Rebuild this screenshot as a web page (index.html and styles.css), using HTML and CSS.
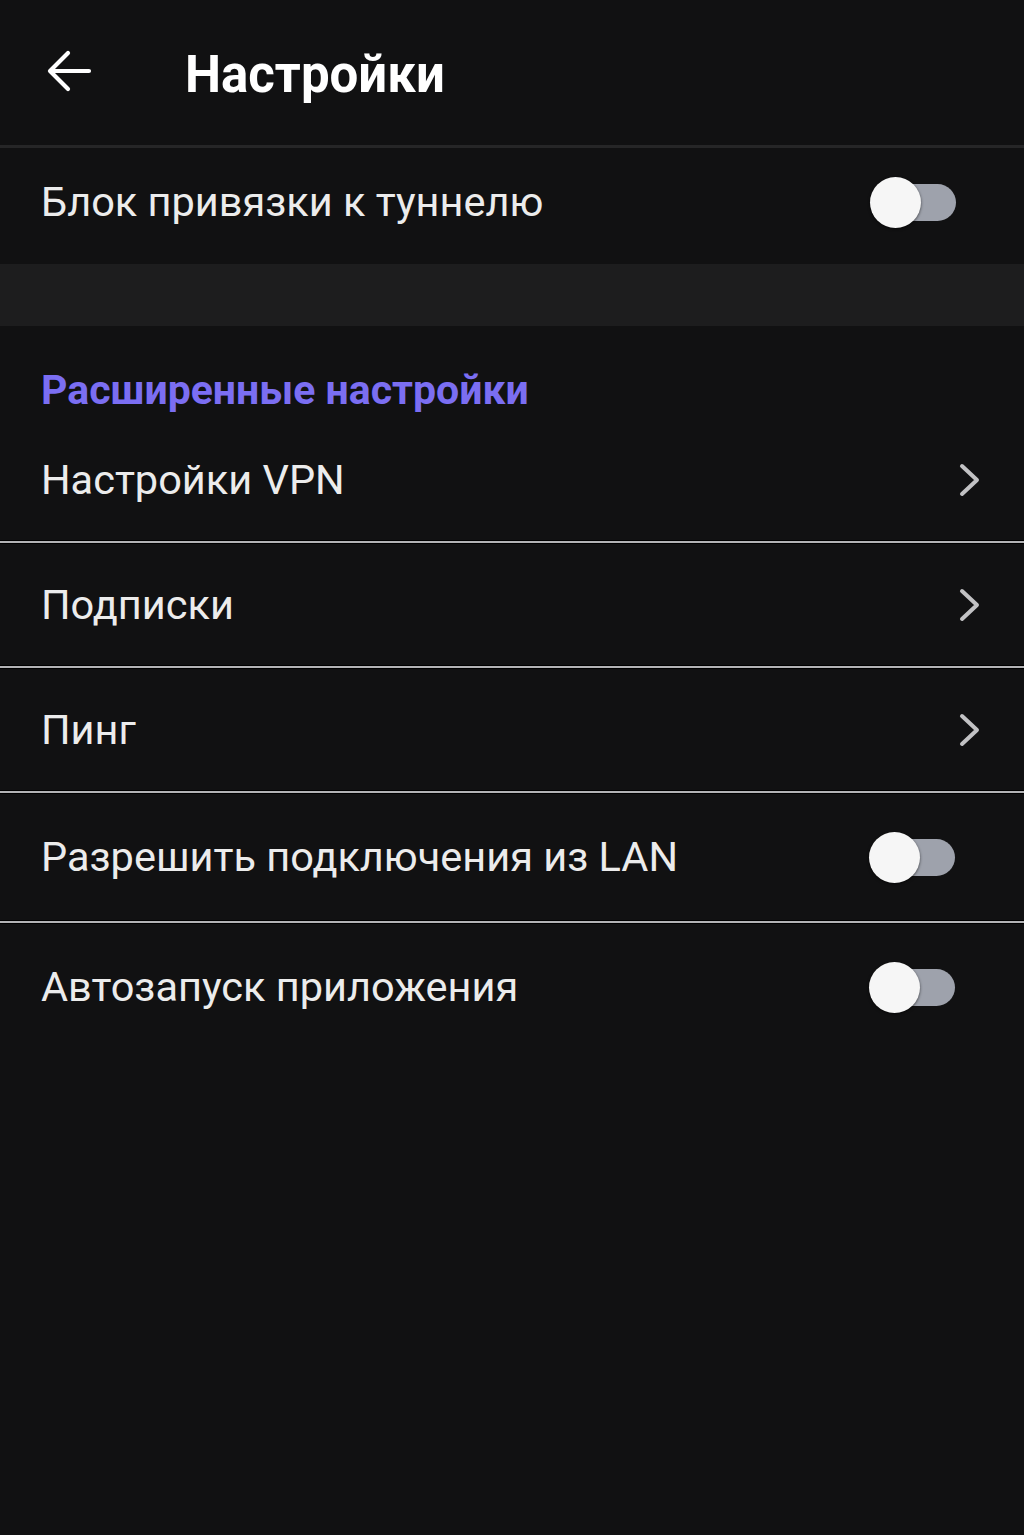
FILE: index.html
```html
<!DOCTYPE html>
<html lang="ru">
<head>
<meta charset="utf-8">
<title>Настройки</title>
<link rel="stylesheet" href="styles.css">
</head>
<body>
<div class="screen">
  <header class="topbar">
    <svg class="back" width="46" height="44" viewBox="0 0 46 44"><path d="M43 22H5M22 4L4 22L22 40" fill="none" stroke="#fff" stroke-width="4.2" stroke-linecap="round" stroke-linejoin="round"/></svg>
    <h1 class="title">Настройки</h1>
  </header>
  <div class="row row-first">
    <span class="label">Блок привязки к туннелю</span>
    <span class="toggle toggle-first"><span class="knob"></span></span>
  </div>
  <div class="band"></div>
  <div class="section-title">Расширенные настройки</div>
  <div class="row row-nav">
    <span class="label">Настройки VPN</span>
    <svg class="chev" width="24" height="36" viewBox="0 0 24 36"><path d="M4 4L19 18L4 32" fill="none" stroke="#c2c2c4" stroke-width="4" stroke-linecap="round" stroke-linejoin="round"/></svg>
  </div>
  <div class="divider"></div>
  <div class="row row-nav">
    <span class="label">Подписки</span>
    <svg class="chev" width="24" height="36" viewBox="0 0 24 36"><path d="M4 4L19 18L4 32" fill="none" stroke="#c2c2c4" stroke-width="4" stroke-linecap="round" stroke-linejoin="round"/></svg>
  </div>
  <div class="divider"></div>
  <div class="row row-nav">
    <span class="label">Пинг</span>
    <svg class="chev" width="24" height="36" viewBox="0 0 24 36"><path d="M4 4L19 18L4 32" fill="none" stroke="#c2c2c4" stroke-width="4" stroke-linecap="round" stroke-linejoin="round"/></svg>
  </div>
  <div class="divider"></div>
  <div class="row row-switch">
    <span class="label">Разрешить подключения из LAN</span>
    <span class="toggle"><span class="knob"></span></span>
  </div>
  <div class="divider"></div>
  <div class="row row-switch">
    <span class="label">Автозапуск приложения</span>
    <span class="toggle"><span class="knob"></span></span>
  </div>
</div>
</body>
</html>
```
FILE: styles.css
```css
html, body {
  margin: 0;
  padding: 0;
  background: #111112;
}
body {
  font-family: Roboto, "Noto Sans", "Liberation Sans", sans-serif;
  color: #ececec;
}
.screen {
  width: 1024px;
  min-height: 1535px;
  background: #111112;
}
.topbar {
  height: 145px;
  display: flex;
  align-items: center;
  border-bottom: 3px solid #262627;
  box-sizing: content-box;
}
.back {
  margin-left: 46px;
  margin-top: -4px;
}
.title {
  margin: 4px 0 0 93px;
  font-size: 51px;
  font-weight: 700;
  color: #ffffff;
  line-height: 1;
}
.row {
  display: flex;
  align-items: center;
  justify-content: space-between;
  padding: 0 41px;
}
.label {
  font-size: 41.5px;
  line-height: 1;
  color: #ececec;
}
.row-first {
  height: 116px;
  box-sizing: border-box;
  padding-bottom: 8px;
  padding-right: 68px;
}
.band {
  height: 62px;
  background: #1d1d1e;
}
.section-title {
  height: 92px;
  box-sizing: border-box;
  padding: 44px 41px 0;
  font-size: 41px;
  font-weight: 700;
  line-height: 1;
  color: #7b6ef2;
}
.row-nav {
  height: 123px;
  padding-right: 42px;
}
.row-switch {
  height: 128px;
  padding-right: 69px;
}
.chev {
  display: block;
}
.divider {
  height: 2px;
  background: #b3b3b5;
  border-top: 1px solid #000;
  border-bottom: 1px solid #000;
  margin: -1px 0;
  position: relative;
  z-index: 1;
}
.toggle {
  position: relative;
  width: 72px;
  height: 37px;
  border-radius: 19px;
  background: #9ea2ac;
  display: block;
}
.knob {
  position: absolute;
  left: -14px;
  top: -7px;
  width: 51px;
  height: 51px;
  border-radius: 50%;
  background: #f6f6f6;
  box-shadow: 0 1px 3px rgba(0,0,0,0.6);
}
```
